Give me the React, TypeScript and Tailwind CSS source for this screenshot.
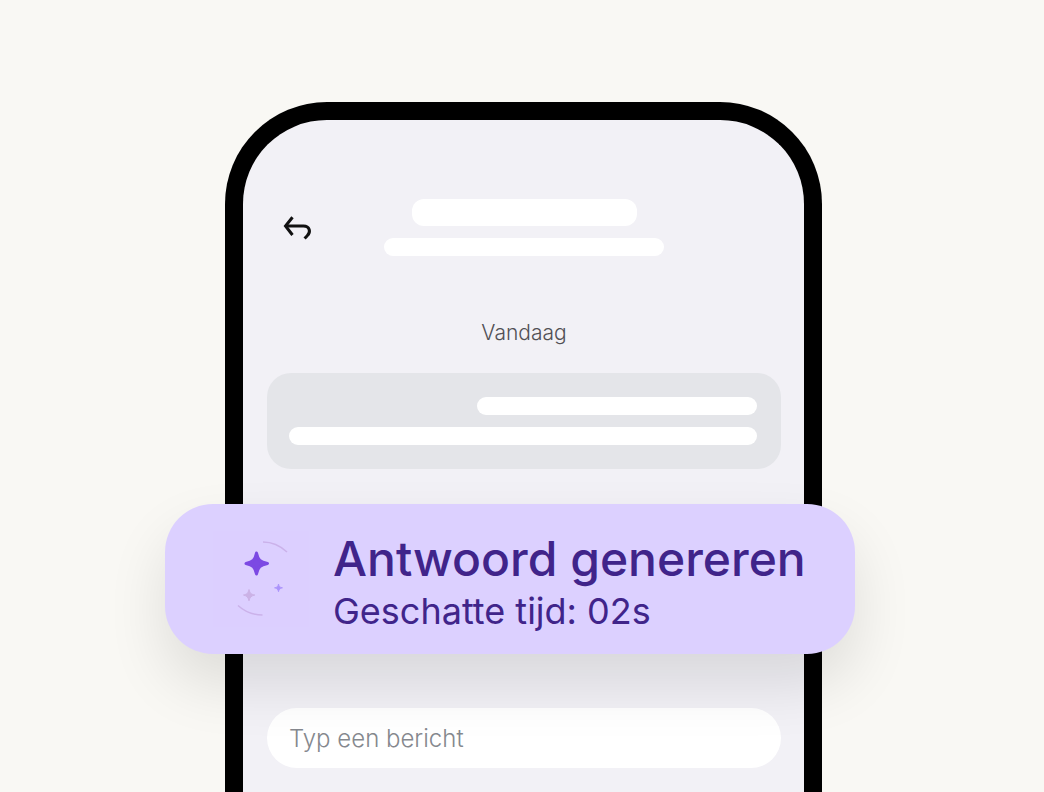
function BackIcon() {
  return (
    <svg width="32" height="28" viewBox="0 0 32 28" fill="none" stroke="#111" strokeWidth="3" aria-hidden="true">
      <path d="M11.5 3.2 L4.5 12 L11.5 21" />
      <path d="M5 12 H22.5 C28.5 12 30.5 18 26 22 L23.6 24.6" />
    </svg>
  );
}

function SparkleIcon() {
  return (
    <svg width="96" height="96" viewBox="213 530 96 96" fill="none" aria-hidden="true" className="shrink-0">
      <rect x="213" y="530" width="96" height="96" fill="#dccfff" />
      <path d="M263 541 C272 541 280 544.500 287 551" stroke="#cbb2ea" strokeWidth="1.5" />
      <path d="M238 604.500 C244.500 610.500 252.500 614 262.500 614" stroke="#cbb2ea" strokeWidth="1.5" />
      <path
        d="M256.500 552 C258 559 260 561 267.500 562.500 C260 564 258 566 256.500 573 C255 566 253 564 246 562.500 C253 561 255 559 256.500 552 Z"
        fill="#7c49e3"
        stroke="#7c49e3"
        strokeWidth="3"
        strokeLinejoin="round"
      />
      <path
        d="M249 588.500 C250 592.500 251 593.200 254.800 594 C251 595 250 596 249 599.800 C248 596 247 595 243.500 594 C247 593.200 248 592.500 249 588.500 Z"
        fill="#cbb2e6"
        stroke="#cbb2e6"
        strokeLinejoin="round"
      />
      <path
        d="M278.500 583 C279.200 586 280 586.300 282.500 586.800 C280 587.500 279.200 588 278.500 590.800 C277.800 588 277 587.500 274.500 586.800 C277 586.300 277.800 586 278.500 583 Z"
        fill="#ab93fb"
        stroke="#ab93fb"
        strokeWidth="0.8"
        strokeLinejoin="round"
      />
    </svg>
  );
}

export default function App() {
  return (
    <main className="flex min-h-screen flex-col items-center overflow-hidden bg-[#f9f8f4] pt-[102px] pl-[3px] font-['Inter',sans-serif]">
      <section className="flex w-full max-w-[597px] flex-1 flex-col rounded-t-[102px] border-[18px] border-b-0 border-black bg-[#f2f1f6] pt-[79px] pr-[23px] pb-6 pl-6">
        <header className="grid grid-cols-[1fr_auto_1fr] items-center">
          <button type="button" aria-label="Terug" className="ml-3.5 w-8">
            <BackIcon />
          </button>
          <div className="flex flex-col items-center gap-3">
            <div className="h-[27px] w-[225px] rounded-xl bg-white" />
            <div className="h-[18px] w-[280px] rounded-full bg-white" />
          </div>
        </header>

        <p className="mt-[61px] text-center text-[21px] leading-8 font-light text-[#515055]">Vandaag</p>

        <div className="mt-6 flex flex-col items-end gap-3 rounded-3xl bg-[#e4e5e9] px-6 py-6 pl-[22px]">
          <div className="h-[18px] w-[280px] rounded-full bg-white" />
          <div className="h-[18px] w-full rounded-full bg-white" />
        </div>

        <div
          role="status"
          className="relative z-10 mt-[35px] -mr-[74px] -ml-[102px] flex h-[150px] items-center gap-6 rounded-[48px] bg-[#dcd0ff] pl-12 text-[#40248a] shadow-[0_30px_60px_rgba(0,0,0,0.11)]"
        >
          <SparkleIcon />
          <div className="pt-2 whitespace-nowrap">
            <p className="text-5xl leading-[56px] font-medium">Antwoord genereren</p>
            <p className="text-4xl leading-[48px]">Geschatte tijd: 02s</p>
          </div>
        </div>

        <input
          type="text"
          aria-label="Typ een bericht"
          placeholder="Typ een bericht"
          className="mt-auto h-[60px] w-full rounded-full bg-white px-[22px] text-2xl text-gray-700 outline-none placeholder:font-light placeholder:text-[#85888e]"
        />
      </section>
    </main>
  );
}
